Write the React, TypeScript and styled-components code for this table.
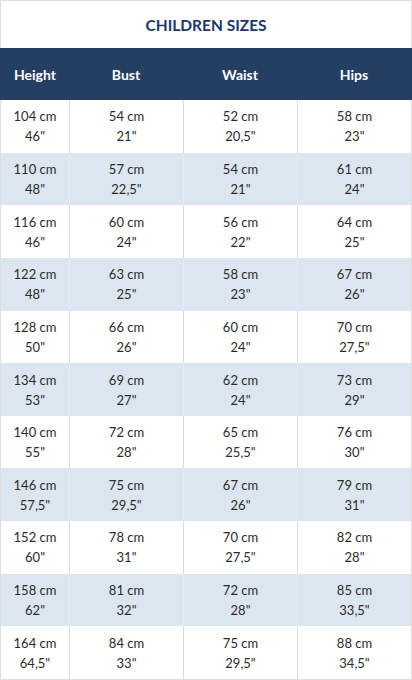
import React from "react";
import styled, { createGlobalStyle } from "styled-components";

const GlobalStyle = createGlobalStyle`
  html, body {
    margin: 0;
    padding: 0;
    background: #ffffff;
  }
  * {
    box-sizing: border-box;
  }
`;

const Chart = styled.div`
  width: 412px;
  height: 680px;
  border: 1px solid #dedede;
  display: flex;
  flex-direction: column;
  font-family: Lato, "Open Sans", sans-serif;
  background: #ffffff;
`;

const Title = styled.div`
  height: 47px;
  display: flex;
  align-items: center;
  justify-content: center;
  color: #1d3768;
  font-size: 15.5px;
  font-weight: 700;
`;

const Grid = styled.div`
  display: grid;
  grid-template-columns: 68px 114px 114px 1fr;
`;

const HeadRow = styled(Grid)`
  height: 52px;
  background: #253f62;
  margin: 0 -1px;
  padding: 0 1px;
`;

const HeadCell = styled.div`
  display: flex;
  align-items: center;
  justify-content: center;
  color: #ffffff;
  font-size: 14px;
  font-weight: 700;
`;

const Body = styled.div`
  flex: 1;
  display: flex;
  flex-direction: column;
`;

const Row = styled(Grid)<{ $shaded: boolean }>`
  flex: 1;
  background: ${(p) => (p.$shaded ? "#dce6f0" : "#ffffff")};
`;

const Cell = styled.div<{ $shaded: boolean; $first?: boolean }>`
  display: flex;
  flex-direction: column;
  align-items: center;
  justify-content: center;
  border-left: ${(p) =>
    p.$first ? "none" : `1px solid ${p.$shaded ? "#e6edf5" : "#dadada"}`};
  color: #2b2b2b;
  font-size: 13px;
  line-height: 20px;
`;

const rows: string[][][] = [
  [["104 cm", '46"'], ["54 cm", '21"'], ["52 cm", '20,5"'], ["58 cm", '23"']],
  [["110 cm", '48"'], ["57 cm", '22,5"'], ["54 cm", '21"'], ["61 cm", '24"']],
  [["116 cm", '46"'], ["60 cm", '24"'], ["56 cm", '22"'], ["64 cm", '25"']],
  [["122 cm", '48"'], ["63 cm", '25"'], ["58 cm", '23"'], ["67 cm", '26"']],
  [["128 cm", '50"'], ["66 cm", '26"'], ["60 cm", '24"'], ["70 cm", '27,5"']],
  [["134 cm", '53"'], ["69 cm", '27"'], ["62 cm", '24"'], ["73 cm", '29"']],
  [["140 cm", '55"'], ["72 cm", '28"'], ["65 cm", '25,5"'], ["76 cm", '30"']],
  [["146 cm", '57,5"'], ["75 cm", '29,5"'], ["67 cm", '26"'], ["79 cm", '31"']],
  [["152 cm", '60"'], ["78 cm", '31"'], ["70 cm", '27,5"'], ["82 cm", '28"']],
  [["158 cm", '62"'], ["81 cm", '32"'], ["72 cm", '28"'], ["85 cm", '33,5"']],
  [["164 cm", '64,5"'], ["84 cm", '33"'], ["75 cm", '29,5"'], ["88 cm", '34,5"']],
];

const headers = ["Height", "Bust", "Waist", "Hips"];

const App: React.FC = () => {
  return (
    <>
      <GlobalStyle />
      <Chart>
        <Title>CHILDREN SIZES</Title>
        <HeadRow>
          {headers.map((h) => (
            <HeadCell key={h}>{h}</HeadCell>
          ))}
        </HeadRow>
        <Body>
          {rows.map((row, i) => {
            const shaded = i % 2 === 1;
            return (
              <Row key={i} $shaded={shaded}>
                {row.map(([cm, inch], j) => (
                  <Cell key={j} $shaded={shaded} $first={j === 0}>
                    <span>{cm}</span>
                    <span>{inch}</span>
                  </Cell>
                ))}
              </Row>
            );
          })}
        </Body>
      </Chart>
    </>
  );
};

export default App;
